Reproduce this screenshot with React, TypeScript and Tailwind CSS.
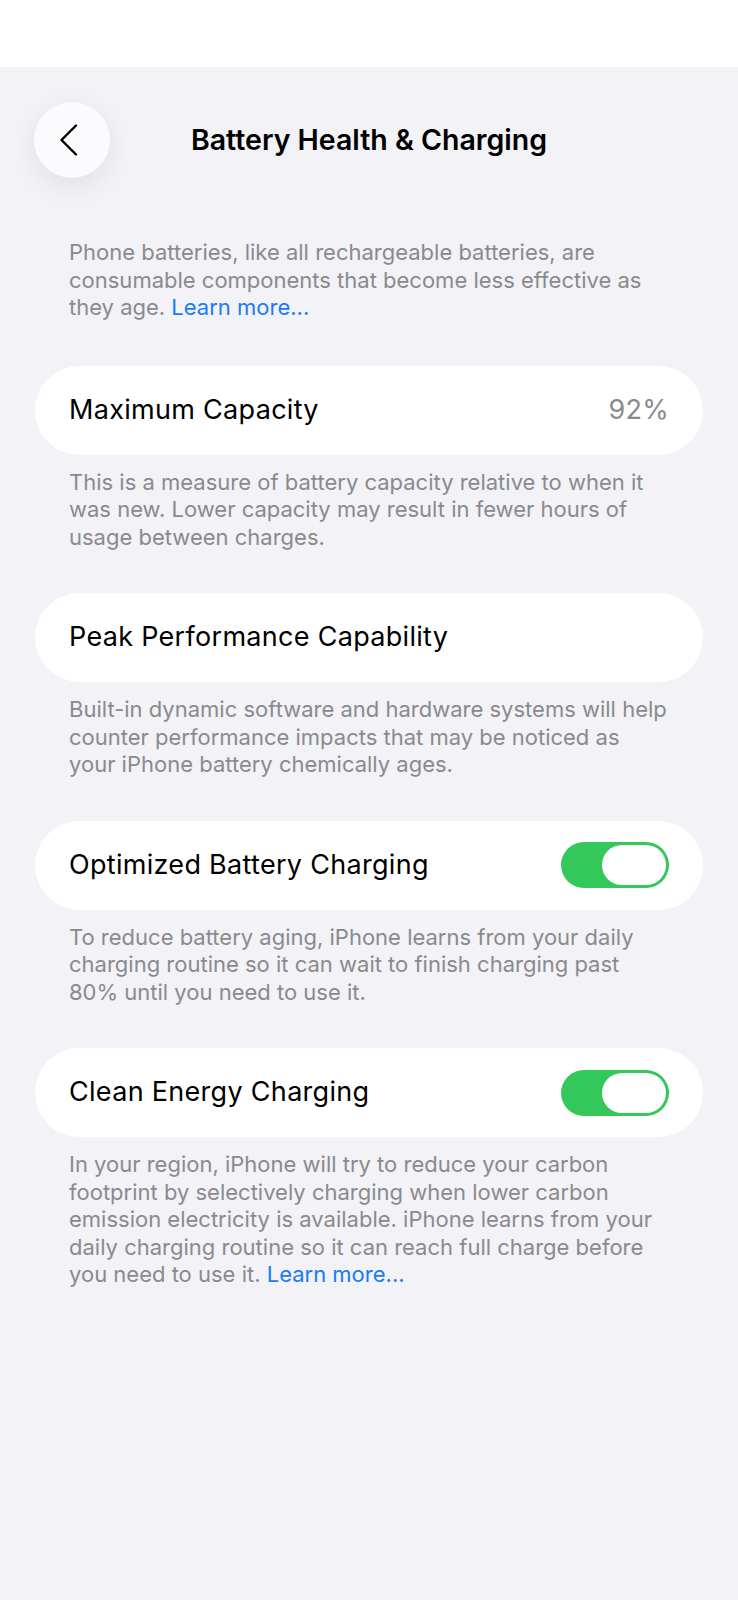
const font = { fontFamily: 'Inter, "Noto Sans", sans-serif' };

function Toggle() {
  return (
    <div className="flex h-[46px] w-[108px] shrink-0 items-center justify-end rounded-full bg-[#34c759] p-[3px]">
      <div className="h-[40px] w-[64px] rounded-full bg-white" />
    </div>
  );
}

function Row({ label, value, toggle }: { label: string; value?: string; toggle?: boolean }) {
  return (
    <div className="flex h-[89px] items-center justify-between rounded-full bg-white pl-[34px] pr-[34px]">
      <span className="text-[27px] tracking-[0.3px] text-black">{label}</span>
      {value && <span className="text-[27px] tracking-[0.3px] text-[#8a8a8e]">{value}</span>}
      {toggle && <Toggle />}
    </div>
  );
}

function Note({ children }: { children: React.ReactNode }) {
  return (
    <p className="mt-[14px] px-[34px] text-[22px] leading-[27.5px] text-[#8a8a8e]">
      {children}
    </p>
  );
}

export default function App() {
  return (
    <div className="min-h-[1600px] bg-[#f2f2f7]" style={font}>
      <div className="h-[67px] bg-white" />
      <div className="relative flex h-[172px] items-start pl-[34px] pt-[35px]">
        <button className="flex h-[76px] w-[76px] items-center justify-center rounded-full bg-[#fbfbfd] shadow-[0_8px_30px_rgba(0,0,0,0.08)]">
          <svg width="20" height="32" viewBox="0 0 20 32" fill="none" className="-ml-[6px]">
            <path d="M17 1.5 L2.5 16 L17 30.5" stroke="#000" strokeWidth="2.4" strokeLinecap="round" strokeLinejoin="round" />
          </svg>
        </button>
        <h1 className="absolute left-0 right-0 top-[52px] text-center text-[28.5px] font-semibold text-black">
          Battery Health &amp; Charging
        </h1>
      </div>

      <div className="px-[35px]">
        <p className="px-[34px] text-[22px] leading-[27.5px] text-[#8a8a8e]">
          Phone batteries, like all rechargeable batteries, are consumable components that become less effective as they age.{" "}
          <span className="text-[#1a7cf5]">Learn more...</span>
        </p>

        <div className="mt-[44px]">
          <Row label="Maximum Capacity" value="92%" />
          <Note>
            This is a measure of battery capacity relative to when it was new. Lower capacity may result in fewer hours of usage between charges.
          </Note>
        </div>

        <div className="mt-[42px]">
          <Row label="Peak Performance Capability" />
          <Note>
            Built-in dynamic software and hardware systems will help counter performance impacts that may be noticed as your iPhone battery chemically ages.
          </Note>
        </div>

        <div className="mt-[42px]">
          <Row label="Optimized Battery Charging" toggle />
          <Note>
            To reduce battery aging, iPhone learns from your daily charging routine so it can wait to finish charging past 80% until you need to use it.
          </Note>
        </div>

        <div className="mt-[42px]">
          <Row label="Clean Energy Charging" toggle />
          <Note>
            In your region, iPhone will try to reduce your carbon footprint by selectively charging when lower carbon emission electricity is available. iPhone learns from your daily charging routine so it can reach full charge before you need to use it.{" "}
            <span className="text-[#1a7cf5]">Learn more...</span>
          </Note>
        </div>
      </div>
    </div>
  );
}
